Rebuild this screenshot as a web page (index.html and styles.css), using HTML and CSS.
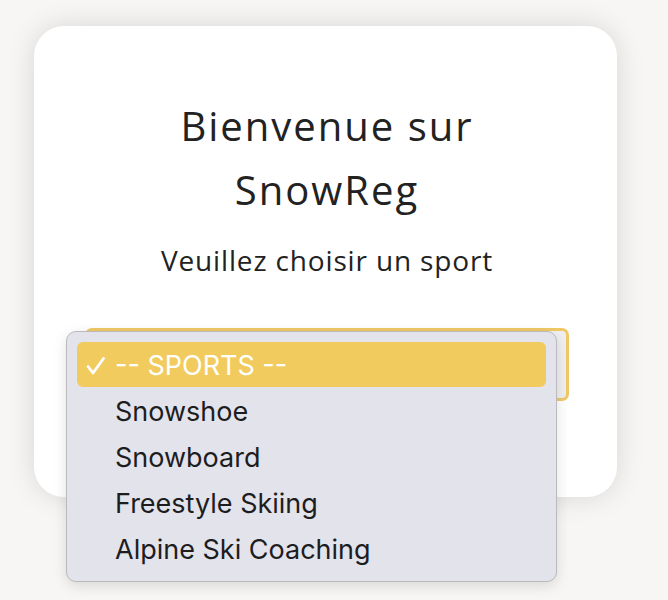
FILE: index.html
```html
<!DOCTYPE html>
<html lang="fr">
<head>
<meta charset="utf-8">
<title>SnowReg</title>
<link rel="stylesheet" href="styles.css">
</head>
<body>
<main class="card">
  <h1 class="title">Bienvenue sur<br>SnowReg</h1>
  <p class="subtitle">Veuillez choisir un sport</p>
  <div class="select"></div>
</main>
<ul class="menu">
  <li class="item selected"><svg class="check" width="20" height="20" viewBox="0 0 20 20"><path d="M2 10.5 L7 17 L17.5 2.5" fill="none" stroke="#fff" stroke-width="2.8" stroke-linecap="round" stroke-linejoin="round"/></svg>-- SPORTS --</li>
  <li class="item">Snowshoe</li>
  <li class="item">Snowboard</li>
  <li class="item">Freestyle Skiing</li>
  <li class="item">Alpine Ski Coaching</li>
</ul>
</body>
</html>
```
FILE: styles.css
```css
html, body {
  margin: 0;
  padding: 0;
}
body {
  background: #f7f6f4;
  width: 668px;
  height: 600px;
  overflow: hidden;
  position: relative;
  font-family: "Open Sans", "Liberation Sans", sans-serif;
  color: #222;
}
.card {
  margin: 26px 0 0 34px;
  width: 583px;
  height: 471px;
  box-sizing: border-box;
  background: #fff;
  border-radius: 30px;
  box-shadow: 0 0 28px rgba(0, 0, 0, 0.13);
  padding: 68px 0 0 51px;
  display: flex;
  flex-direction: column;
  align-items: flex-start;
}
.title {
  width: 484px;
  margin: 0;
  font-weight: 400;
  font-size: 40px;
  line-height: 64px;
  text-align: center;
  letter-spacing: 2px;
}
.subtitle {
  width: 484px;
  margin: 18px 0 0;
  font-size: 28px;
  line-height: 40px;
  text-align: center;
  letter-spacing: 0.85px;
}
.select {
  margin-top: 48px;
  width: 484px;
  height: 73px;
  box-sizing: border-box;
  border: 3px solid #f0c966;
  border-radius: 7px;
  background: #efeff1;
}
.menu {
  position: absolute;
  left: 66px;
  top: 331px;
  width: 491px;
  height: 251px;
  box-sizing: border-box;
  margin: 0;
  padding: 10px 10px;
  list-style: none;
  background: #e3e3eb;
  border: 1px solid #b9b9be;
  border-radius: 10px;
  box-shadow: 0 4px 14px rgba(0, 0, 0, 0.12);
  font-family: "Inter", "Liberation Sans", sans-serif;
  font-size: 27px;
}
.item {
  height: 46px;
  line-height: 48px;
  padding-left: 38px;
  color: #1d1d1f;
  position: relative;
  border-radius: 6px;
}
.item.selected {
  background: #f2cb5f;
  color: #fff;
  height: 45px;
  line-height: 47px;
  margin-bottom: 1px;
}
.check {
  position: absolute;
  left: 9px;
  top: 14px;
}
```
